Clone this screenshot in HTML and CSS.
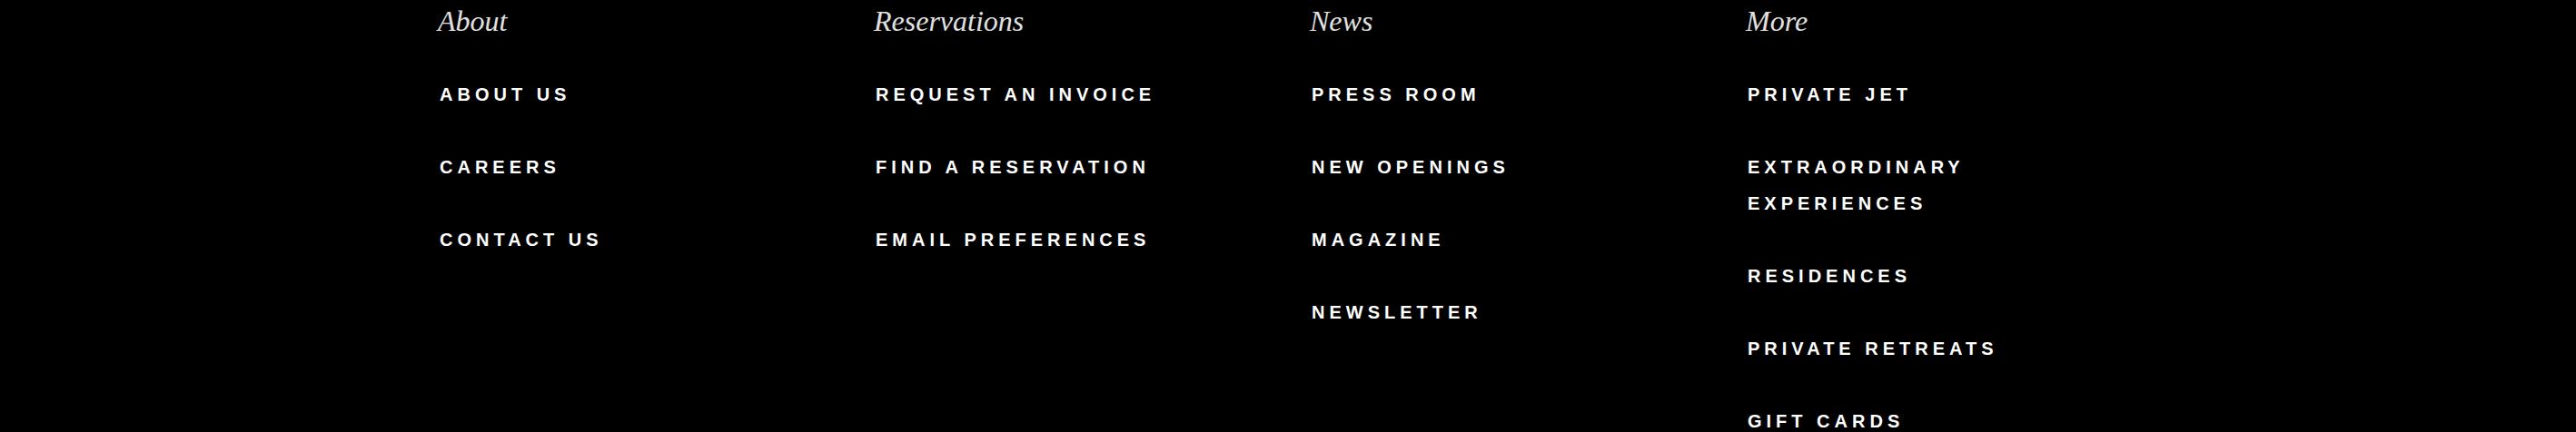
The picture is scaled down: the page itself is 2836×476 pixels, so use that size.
FILE: index.html
```html
<!DOCTYPE html>
<html lang="en">
<head>
<meta charset="utf-8">
<title>Footer</title>
<link rel="stylesheet" href="styles.css">
</head>
<body>
<footer class="footer">
  <nav class="cols">
    <section class="col">
      <h3 class="col-title">About</h3>
      <ul class="links">
        <li><a href="#">About Us</a></li>
        <li><a href="#">Careers</a></li>
        <li><a href="#">Contact Us</a></li>
      </ul>
    </section>
    <section class="col">
      <h3 class="col-title">Reservations</h3>
      <ul class="links">
        <li><a href="#">Request an Invoice</a></li>
        <li><a href="#">Find a Reservation</a></li>
        <li><a href="#">Email Preferences</a></li>
      </ul>
    </section>
    <section class="col">
      <h3 class="col-title">News</h3>
      <ul class="links">
        <li><a href="#">Press Room</a></li>
        <li><a href="#">New Openings</a></li>
        <li><a href="#">Magazine</a></li>
        <li><a href="#">Newsletter</a></li>
      </ul>
    </section>
    <section class="col">
      <h3 class="col-title">More</h3>
      <ul class="links">
        <li><a href="#">Private Jet</a></li>
        <li><a href="#">Extraordinary Experiences</a></li>
        <li><a href="#">Residences</a></li>
        <li><a href="#">Private Retreats</a></li>
        <li><a href="#">Gift Cards</a></li>
      </ul>
    </section>
  </nav>
</footer>
</body>
</html>
```

FILE: styles.css
```css
html, body {
  margin: 0;
  padding: 0;
  background: #000;
}

.footer {
  background: #000;
  padding: 3px 0 0 484px;
  height: 476px;
  box-sizing: border-box;
  overflow: hidden;
}

.cols {
  display: grid;
  grid-template-columns: repeat(4, 400px);
  column-gap: 80px;
}

.col-title {
  margin: 0 0 0 -2px;
  font-family: "Liberation Serif", "Times New Roman", serif;
  font-style: italic;
  font-weight: normal;
  font-size: 32px;
  line-height: 40px;
  color: #e0e0e0;
}

.links {
  list-style: none;
  margin: 41px 0 0;
  padding: 0;
  display: flex;
  flex-direction: column;
  gap: 40px;
}

.links a {
  font-family: "Liberation Sans", Arial, sans-serif;
  font-weight: bold;
  font-size: 20px;
  line-height: 40px;
  letter-spacing: 5px;
  text-transform: uppercase;
  color: #fff;
  text-decoration: none;
  display: block;
}
```
